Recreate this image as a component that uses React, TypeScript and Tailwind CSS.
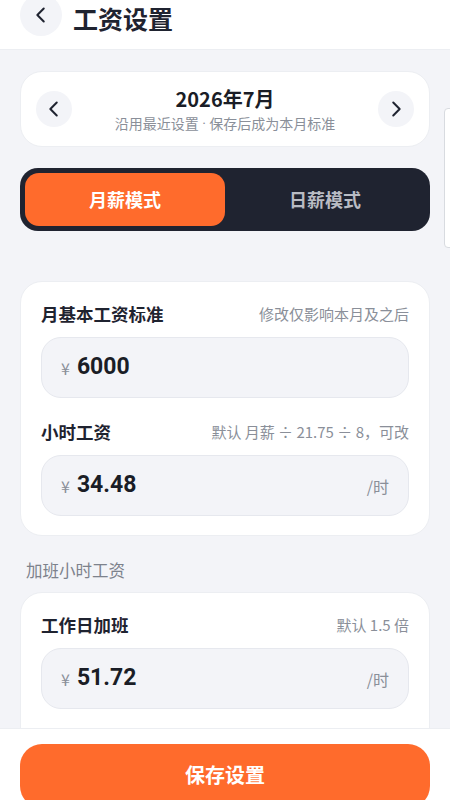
import React from "react";

const Chevron = ({ dir }: { dir: "left" | "right" }) => (
  <svg width="22" height="22" viewBox="0 0 24 24" fill="none" stroke="#1f2330" strokeWidth="2.2" strokeLinecap="round" strokeLinejoin="round">
    {dir === "left" ? <path d="M15 5l-7 7 7 7" /> : <path d="M9 5l7 7-7 7" />}
  </svg>
);

const Field = ({ label, hint, value, unit }: { label: string; hint: string; value: string; unit?: string }) => (
  <div className="flex flex-col">
    <div className="flex items-center justify-between h-[24px]">
      <span className="text-[17.5px] font-bold text-[#1f2330]">{label}</span>
      <span className="text-[15px] text-[#8a8f99]">{hint}</span>
    </div>
    <div className="mt-[11px] h-[61px] rounded-[20px] bg-[#f3f4f8] border border-[#e6e8ee] flex items-center pl-[19px] pr-[19px]">
      <span className="text-[16px] text-[#8a8f99] mr-[7px]">¥</span>
      <span className="text-[23px] font-bold text-[#1a1d26]" style={{ fontFamily: 'Roboto, sans-serif' }}>{value}</span>
      <span className="flex-1" />
      {unit && <span className="text-[16px] text-[#8a8f99]">{unit}</span>}
    </div>
  </div>
);

export default function App() {
  return (
    <div
      className="relative w-[450px] h-[800px] overflow-hidden bg-[#f3f4f8] flex flex-col"
      style={{ fontFamily: '"Noto Sans CJK SC", "Noto Sans", sans-serif' }}
    >
      <header className="h-[50px] bg-white border-b border-[#eceef2] flex items-start px-[20px] shrink-0">
        <div className="h-[36px] flex items-center gap-[11px]">
          <div className="-mt-[7px] w-[42px] h-[42px] rounded-full bg-[#f3f4f8] flex items-center justify-center">
            <Chevron dir="left" />
          </div>
          <span className="text-[25px] font-bold text-[#1f2330] leading-[36px]">工资设置</span>
        </div>
      </header>

      <main className="flex flex-col px-[20px] pt-[21px]">
        <div className="h-[76px] rounded-[22px] bg-white border border-[#eceef2] flex items-center justify-between px-[15px]">
          <div className="w-[36px] h-[36px] rounded-full bg-[#f3f4f8] flex items-center justify-center">
            <Chevron dir="left" />
          </div>
          <div className="flex flex-col items-center">
            <span className="text-[20px] font-bold text-[#1a1d26] leading-[26px]">2026年7月</span>
            <span className="text-[14px] text-[#8a8f99] leading-[18px] mt-[2px]">
              沿用最近设置<span style={{ fontFamily: 'Roboto, sans-serif' }}> · </span>保存后成为本月标准
            </span>
          </div>
          <div className="w-[36px] h-[36px] rounded-full bg-[#f3f4f8] flex items-center justify-center">
            <Chevron dir="right" />
          </div>
        </div>

        <div className="mt-[21px] h-[63px] rounded-[18px] bg-[#1f2330] p-[5px] flex">
          <div className="flex-1 rounded-[14px] bg-[#ff6b2c] flex items-center justify-center">
            <span className="text-[18px] font-bold text-white">月薪模式</span>
          </div>
          <div className="flex-1 flex items-center justify-center">
            <span className="text-[18px] font-bold text-[#b9bcc4]">日薪模式</span>
          </div>
        </div>

        <div className="mt-[50px] rounded-[22px] bg-white border border-[#eceef2] px-[20px] pt-[20px] pb-[19px] flex flex-col gap-[22px]">
          <Field label="月基本工资标准" hint="修改仅影响本月及之后" value="6000" />
          <Field label="小时工资" hint="默认 月薪 ÷ 21.75 ÷ 8，可改" value="34.48" unit="/时" />
        </div>

        <div className="mt-[23px] pl-[6px] h-[22px] flex items-center">
          <span className="text-[16.5px] text-[#7d828c]">加班小时工资</span>
        </div>

        <div className="mt-[11px] rounded-[22px] bg-white border border-[#eceef2] px-[20px] pt-[20px] pb-[80px] flex flex-col">
          <Field label="工作日加班" hint="默认 1.5 倍" value="51.72" unit="/时" />
        </div>
      </main>

      <div className="absolute left-0 right-0 top-[728px] h-[72px] bg-white border-t border-[#eceef2] px-[20px] pt-[15px]">
        <div className="h-[64px] rounded-[22px] bg-[#ff6b2c] flex items-start justify-center pt-[17px]">
          <span className="text-[20px] font-bold text-white leading-[28px]">保存设置</span>
        </div>
      </div>

      <div className="absolute left-[444px] top-[108px] w-[20px] h-[140px] rounded-[4px] bg-white border border-[#d8dbe0]" />
    </div>
  );
}
